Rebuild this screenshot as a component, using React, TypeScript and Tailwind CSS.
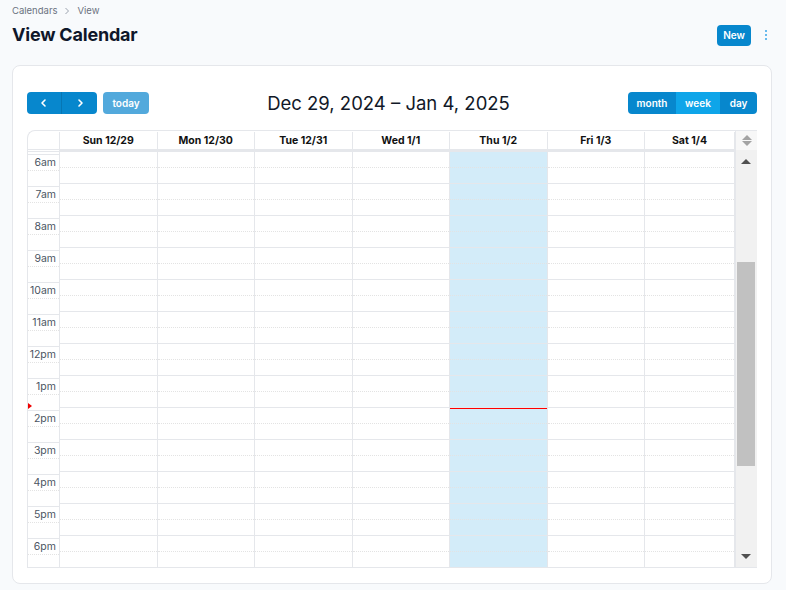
import React from "react";

const days = [
  "Sun 12/29",
  "Mon 12/30",
  "Tue 12/31",
  "Wed 1/1",
  "Thu 1/2",
  "Fri 1/3",
  "Sat 1/4",
];
const hours = ["6am", "7am", "8am", "9am", "10am", "11am", "12pm", "1pm", "2pm", "3pm", "4pm", "5pm", "6pm"];

function Top() {
  return (
    <>
      <div className="h-[2px] border-b border-[#e5e7eb]" />
      <div className="h-[3px] border-b border-[#e5e7eb]" />
    </>
  );
}

function Slots() {
  return (
    <>
      <Top />
      {hours.map((h) => (
        <div key={h} className="flex flex-col">
          <div className="h-[16px] border-b border-dotted border-[#e3e3e3]" />
          <div className="h-[16px] border-b border-[#e5e7eb]" />
        </div>
      ))}
    </>
  );
}

export default function App() {
  return (
    <div className="min-h-[590px] w-[786px] bg-[#f8fafc] pl-3 pr-[14px] pt-[5px]" style={{ fontFamily: "Inter, 'Noto Sans', sans-serif" }}>
      <div className="flex items-center gap-[4px] text-[9.5px] text-[#6b7280] leading-[12px]">
        <span>Calendars</span>
        <svg width="10" height="10" viewBox="0 0 10 10" className="mx-[1px]">
          <path d="M3.5 2 L6.5 5 L3.5 8" fill="none" stroke="#9ca3af" strokeWidth="1" />
        </svg>
        <span>View</span>
      </div>
      <div className="mt-[6px] flex items-center justify-between">
        <h1 className="text-[18px] font-bold leading-[24px] text-[#0f172a] tracking-[-0.2px]">View Calendar</h1>
        <div className="flex items-center">
          <button className="h-[21px] rounded-[4px] bg-[#0787cd] px-[6px] text-[10px] font-semibold text-white">New</button>
          <div className="ml-[12px] mr-[3px] flex w-[6px] flex-col items-center gap-[2px]">
            <span className="h-[2px] w-[2px] rounded-full bg-[#38a5e8]" />
            <span className="h-[2px] w-[2px] rounded-full bg-[#38a5e8]" />
            <span className="h-[2px] w-[2px] rounded-full bg-[#38a5e8]" />
          </div>
        </div>
      </div>

      <div className="mt-[18px] rounded-[8px] border border-[#e5e7eb] bg-white px-[14px] pt-[26px] pb-[15px]">
        <div className="flex items-center justify-between">
          <div className="flex items-center gap-[6px]">
            <div className="flex h-[22px] overflow-hidden rounded-[4px] bg-[#0787cd]">
              <button className="flex w-[35px] items-center justify-center border-r border-[#0676b4]">
                <svg width="10" height="10" viewBox="0 0 10 10">
                  <path d="M6 2 L3 5 L6 8" fill="none" stroke="white" strokeWidth="1.6" strokeLinecap="round" strokeLinejoin="round" />
                </svg>
              </button>
              <button className="flex w-[35px] items-center justify-center">
                <svg width="10" height="10" viewBox="0 0 10 10">
                  <path d="M4 2 L7 5 L4 8" fill="none" stroke="white" strokeWidth="1.6" strokeLinecap="round" strokeLinejoin="round" />
                </svg>
              </button>
            </div>
            <button className="h-[22px] w-[46px] rounded-[4px] bg-[#52a9dc] text-[10px] font-semibold text-white">today</button>
          </div>
          <div className="text-[18.5px] leading-[22px] text-[#111827]">Dec 29, 2024 – Jan 4, 2025</div>
          <div className="flex h-[22px] overflow-hidden rounded-[4px] text-[10px] font-semibold text-white">
            <button className="w-[48px] bg-[#0787cd]">month</button>
            <button className="w-[44px] bg-[#0ea5e9]">week</button>
            <button className="w-[37px] bg-[#0787cd]">day</button>
          </div>
        </div>

        <div className="mt-[16px] flex h-[438px] overflow-hidden rounded-tl-[8px] border-l border-t border-b border-[#e5e7eb]">
          <div className="flex flex-1 flex-col">
            {/* header */}
            <div className="flex h-[19px] shrink-0 border-b border-[#e5e7eb] pt-[1px] text-[10.5px] font-bold text-[#111]">
              <div className="w-[32px] border-r border-[#e5e7eb]" />
              {days.map((d, i) => (
                <div
                  key={d}
                  className={`flex items-center justify-center border-r border-[#e5e7eb] ${i === 6 ? "flex-1" : "w-[97.5px]"}`}
                >
                  {d}
                </div>
              ))}
            </div>
            {/* body */}
            <div className="flex flex-1 overflow-hidden">
              <div className="relative w-[32px] shrink-0 border-r border-[#e5e7eb]">
                <Top />
                {hours.map((h) => (
                  <div key={h} className="flex flex-col">
                    <div className="flex h-[16px] items-center justify-end border-b border-dotted border-[#e3e3e3] pr-[3px] text-[10.5px] text-[#4b5563]">
                      {h}
                    </div>
                    <div className="h-[16px] border-b border-[#e5e7eb]" />
                  </div>
                ))}
                <div className="absolute left-0 top-[253px] h-0 w-0 border-y-[3px] border-l-[4px] border-y-transparent border-l-[#ef0000]" />
              </div>
              {days.map((d, i) => (
                <div
                  key={d}
                  className={`relative flex shrink-0 flex-col border-r border-[#e5e7eb] ${i === 6 ? "flex-1" : "w-[97.5px]"} ${i === 4 ? "bg-[#d3ecf9]" : ""}`}
                >
                  <Slots />
                  {i === 4 && <div className="absolute left-0 right-0 top-[258px] h-0 border-t-[1.5px] border-[#ff0000]" />}
                </div>
              ))}
            </div>
          </div>
          {/* scrollbar */}
          <div className="flex w-[22px] flex-col border-l border-[#e5e7eb] bg-[#f1f1f1]">
            <div className="flex h-[19px] flex-col items-center justify-center gap-[1px] bg-[#f7f7f7]">
              <div className="h-0 w-0 border-x-[5px] border-b-[5px] border-x-transparent border-b-[#a3a3a3]" />
              <div className="h-0 w-0 border-x-[5px] border-t-[5px] border-x-transparent border-t-[#a3a3a3]" />
            </div>
            <div className="flex flex-1 flex-col items-center px-[1px] pr-[2px]">
              <div className="mt-[9px] h-0 w-0 border-x-[5px] border-b-[5px] border-x-transparent border-b-[#505050]" />
              <div className="mt-[98px] h-[204px] w-full bg-[#c1c1c1]" />
              <div className="flex-1" />
              <div className="mb-[8px] h-0 w-0 border-x-[5px] border-t-[5px] border-x-transparent border-t-[#505050]" />
            </div>
          </div>
        </div>
      </div>
    </div>
  );
}
